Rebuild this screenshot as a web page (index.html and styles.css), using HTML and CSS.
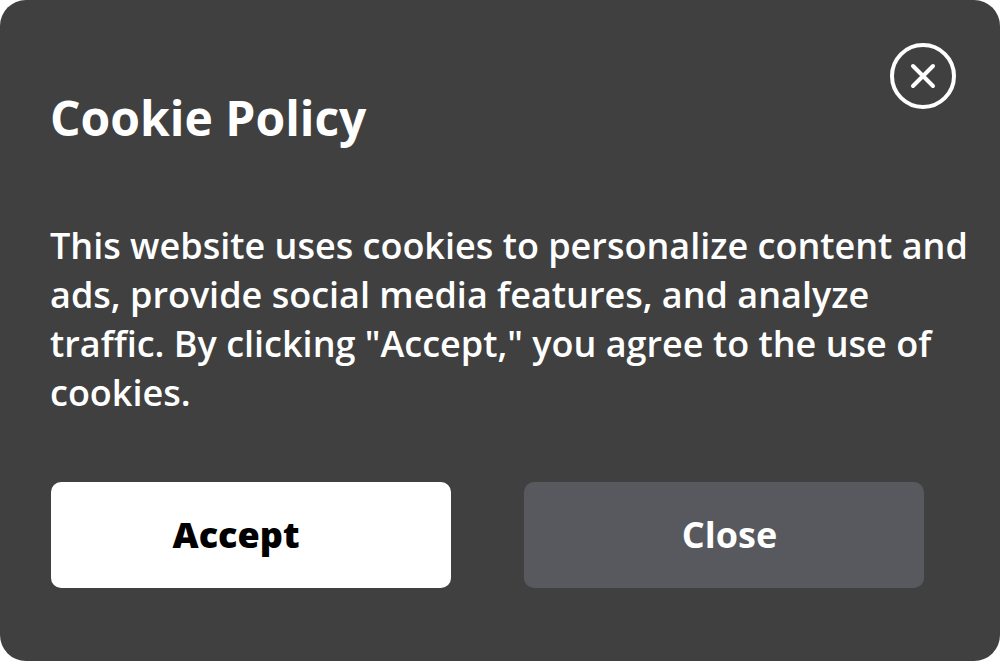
FILE: index.html
```html
<!DOCTYPE html>
<html lang="en">
<head>
    <meta charset="UTF-8">
    <meta name="viewport" content="width=device-width, initial-scale=1.0">
    <title>Cookie Policy</title>
    <link rel="stylesheet" href="styles.css">
</head>
<body>
    <div class="cookie-dialog">
        <button class="dismiss" aria-label="Dismiss">
            <svg width="68" height="68" viewBox="0 0 68 68" fill="none" stroke="white" stroke-width="4" stroke-linecap="round">
                <circle cx="34" cy="34" r="31"/>
                <path d="M24 24 L44 44 M44 24 L24 44"/>
            </svg>
        </button>

        <h1 class="title">Cookie Policy</h1>
        <p class="message">This website uses cookies to personalize content and ads, provide social media features, and analyze traffic. By clicking "Accept," you agree to the use of cookies.</p>

        <div class="actions">
            <button class="btn btn-accept">Accept</button>
            <button class="btn btn-close">Close</button>
        </div>
    </div>
</body>
</html>
```

FILE: styles.css
```css
html, body {
    height: 100%;
}
body {
    margin: 0;
    background-color: white;
    font-family: "Open Sans", "Liberation Sans", sans-serif;
}
.cookie-dialog {
    position: relative;
    box-sizing: border-box;
    height: 100%;
    padding: 89px 24px 0 50px;
    background-color: #404040;
    border-radius: 26px;
    color: white;
}
.dismiss {
    position: absolute;
    top: 42px;
    right: 43px;
    padding: 0;
    border: none;
    background: none;
    cursor: pointer;
    line-height: 0;
}
.title {
    margin: 0;
    font-size: 48px;
    font-weight: 700;
    line-height: 1.2;
}
.message {
    margin: 74px 0 0;
    font-size: 36px;
    font-weight: 600;
    line-height: 49px;
}
.actions {
    display: flex;
    gap: 73px;
    margin: 65px 0 0 1px;
}
.btn {
    box-sizing: border-box;
    width: 400px;
    height: 106px;
    border: none;
    border-radius: 10px;
    font-family: inherit;
    font-size: 36px;
    cursor: pointer;
}
.btn-accept {
    padding: 0 30px 0 0;
    background-color: white;
    color: black;
    font-weight: 800;
}
.btn-close {
    padding: 0 0 0 11px;
    background-color: #58595e;
    color: white;
    font-weight: 700;
}
```
